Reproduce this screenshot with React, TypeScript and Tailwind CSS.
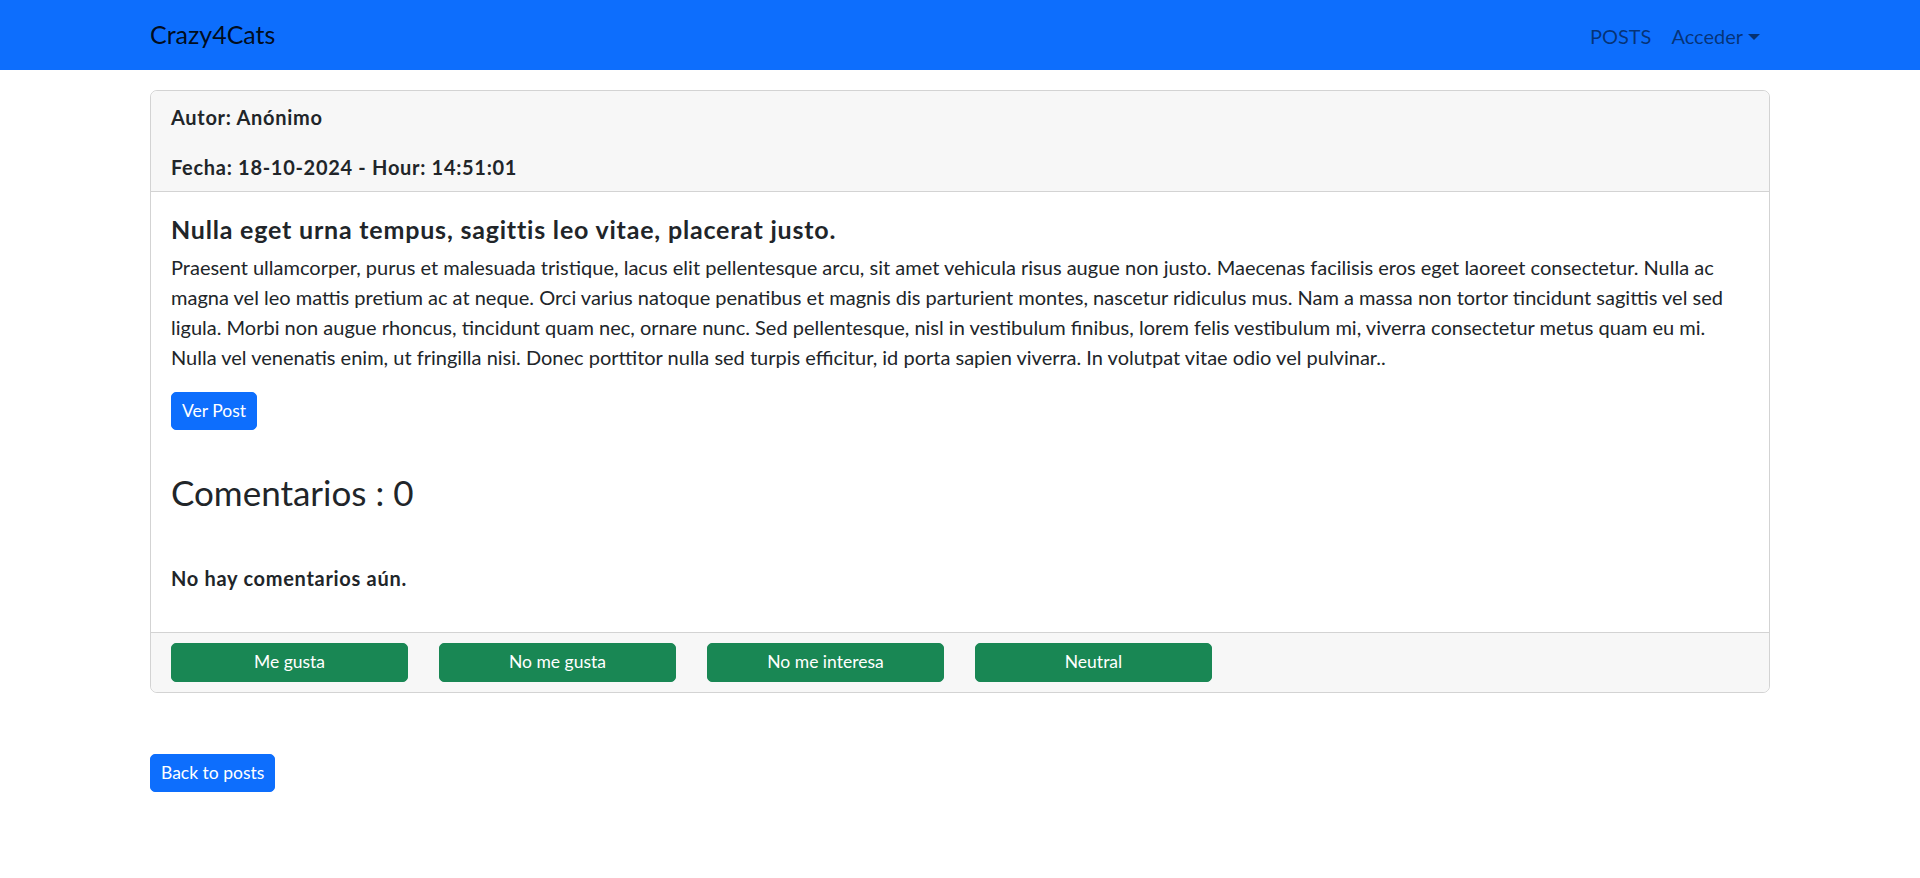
import { useState } from "react";

const body =
  "Praesent ullamcorper, purus et malesuada tristique, lacus elit pellentesque arcu, sit amet vehicula risus augue non justo. Maecenas facilisis eros eget laoreet consectetur. Nulla ac magna vel leo mattis pretium ac at neque. Orci varius natoque penatibus et magnis dis parturient montes, nascetur ridiculus mus. Nam a massa non tortor tincidunt sagittis vel sed ligula. Morbi non augue rhoncus, tincidunt quam nec, ornare nunc. Sed pellentesque, nisl in vestibulum finibus, lorem felis vestibulum mi, viverra consectetur metus quam eu mi. Nulla vel venenatis enim, ut fringilla nisi. Donec porttitor nulla sed turpis efficitur, id porta sapien viverra. In volutpat vitae odio vel pulvinar..";

const reactions = ["Me gusta", "No me gusta", "No me interesa", "Neutral"];

function Navbar() {
  const [open, setOpen] = useState(false);
  return (
    <nav className="h-[70px] bg-[#0d6efd]">
      <div className="mx-auto flex h-full w-[1620px] items-center justify-between">
        <a href="#" className="text-[25px] leading-[37.5px] text-black/90">
          Crazy4Cats
        </a>
        <ul className="flex items-center pt-[2px] text-[20px] leading-[30px] text-black/55">
          <li>
            <a href="#" className="block px-[10px] py-[10px]">
              POSTS
            </a>
          </li>
          <li className="relative">
            <button
              onClick={() => setOpen(!open)}
              className="flex items-center px-[10px] py-[10px]"
            >
              Acceder
              <span className="ml-[5px] mt-[1px] h-0 w-0 border-x-[6px] border-t-[6px] border-x-transparent border-t-black/55" />
            </button>
          </li>
        </ul>
      </div>
    </nav>
  );
}

function PostCard() {
  return (
    <div className="mt-[20px] rounded-[7px] border border-[#d3d3d3]">
      <div className="rounded-t-[7px] border-b border-[#d3d3d3] bg-[#f7f7f7] px-[20px] pt-[11px] pb-[9px] text-[20px] leading-[30px] tracking-[0.7px]">
        <p className="mb-[20px] font-bold">Autor: Anónimo</p>
        <p className="font-bold">Fecha: 18-10-2024 - Hour: 14:51:01</p>
      </div>
      <div className="px-[20px] pt-[22px] pb-[39px]">
        <h5 className="mb-[8px] text-[25px] leading-[30px] font-bold tracking-[0.8px]">
          Nulla eget urna tempus, sagittis leo vitae, placerat justo.
        </h5>
        <p className="mb-[20px] text-[20px] leading-[30px]">{body}</p>
        <button className="rounded-[5px] border border-[#0d6efd] bg-[#0d6efd] px-[10px] py-[5px] text-[17.5px] leading-[26.25px] text-white">
          Ver Post
        </button>
        <h3 className="mt-[41px] text-[35px] leading-[42px] font-normal">
          Comentarios : 0
        </h3>
        <p className="mt-[50px] text-[20px] leading-[30px] font-bold tracking-[0.7px]">
          No hay comentarios aún.
        </p>
      </div>
      <div className="flex gap-[31px] rounded-b-[7px] border-t border-[#d3d3d3] bg-[#f7f7f7] px-[20px] py-[10px]">
        {reactions.map((r) => (
          <button
            key={r}
            className="w-[237px] rounded-[5px] border border-[#198754] bg-[#198754] px-[10px] py-[5px] text-[17.5px] leading-[26.25px] text-white"
          >
            {r}
          </button>
        ))}
      </div>
    </div>
  );
}

export default function App() {
  return (
    <div
      className="min-h-[878px] bg-white text-[#212529]"
      style={{ fontFamily: "Lato, 'Noto Sans', sans-serif" }}
    >
      <Navbar />
      <div className="mx-auto w-[1620px]">
        <PostCard />
        <button className="mt-[61px] rounded-[5px] border border-[#0d6efd] bg-[#0d6efd] px-[10px] py-[5px] text-[17.5px] leading-[26.25px] text-white">
          Back to posts
        </button>
      </div>
    </div>
  );
}
